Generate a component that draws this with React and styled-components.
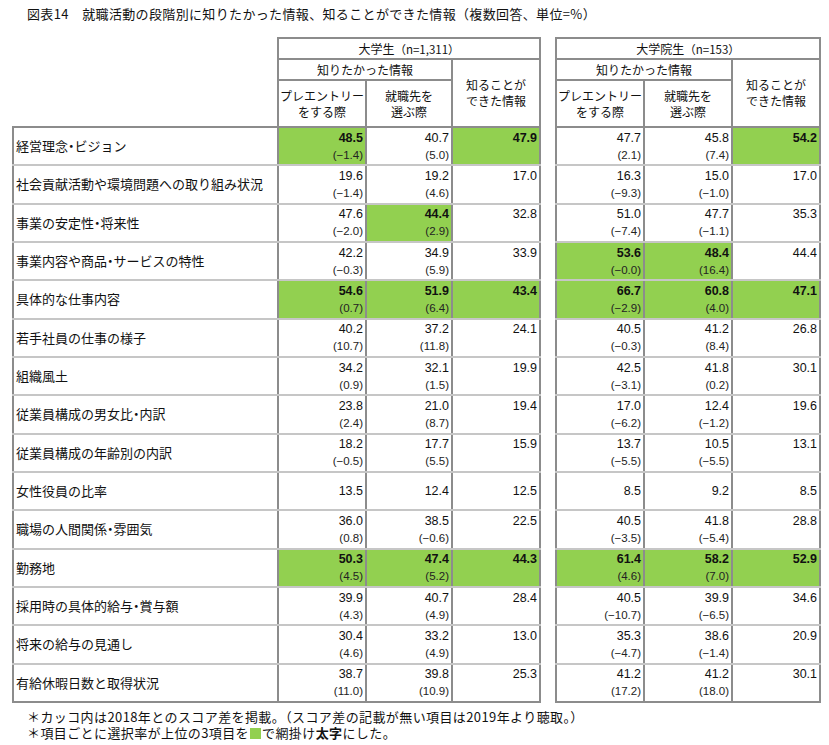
import React from "react";
import styled, { createGlobalStyle } from "styled-components";

const Global = createGlobalStyle`
  html, body { margin: 0; padding: 0; background: #fff; }
  body { font-family: "Noto Sans CJK JP", "Liberation Sans", sans-serif; color: #111; }
`;

const GREEN = "#92d050";
const DARK = "#8c8c8c";
const LIGHT = "#c6c6c6";

const Page = styled.div`
  width: 829px;
  height: 745px;
  box-sizing: border-box;
  padding-top: 6px;
`;

const Title = styled.h1`
  margin: 0 0 0 27px;
  font-size: 13px;
  font-weight: 400;
  line-height: 16px;
  white-space: nowrap;
  letter-spacing: 0.35px;
`;

const Tables = styled.div`
  display: flex;
  align-items: flex-start;
  gap: 14px;
  margin: 15px 0 0 12px;
`;

const Table = styled.table`
  border-collapse: collapse;
  table-layout: fixed;
  width: ${(p) => p.$width}px;
`;

const HeadRow = styled.tr`
  height: ${(p) => p.$h}px;
`;

const Corner = styled.th`
  border: none;
  border-bottom: 2px solid ${DARK};
  padding: 0;
`;

const Head = styled.th`
  border: 2px solid ${DARK};
  font-weight: 400;
  font-size: 12px;
  line-height: 16px;
  padding: 0;
  text-align: center;
  vertical-align: middle;
  white-space: nowrap;
`;

const Small = styled.span`
  font-size: 11.5px;
`;

const BodyRow = styled.tr`
  height: 38.33px;
`;

const Label = styled.td`
  border-left: 2px solid ${DARK};
  border-right: 2px solid ${DARK};
  border-bottom: 2px solid ${(p) => (p.$last ? DARK : LIGHT)};
  font-size: 13px;
  line-height: 16px;
  padding: 0 0 0 2px;
  white-space: nowrap;
  vertical-align: middle;
`;

const Dot = styled.span`
  font-feature-settings: "palt";
`;

const Cell = styled.td`
  border-left: 2px solid ${DARK};
  border-right: 2px solid ${DARK};
  border-bottom: 2px solid ${(p) => (p.$last ? DARK : LIGHT)};
  background: ${(p) => (p.$hi ? GREEN : "#fff")};
  padding: 0 2px 0 0;
  text-align: right;
  vertical-align: middle;
  font-family: "Liberation Sans", "Noto Sans CJK JP", sans-serif;
`;

const Main = styled.div`
  font-size: 12.5px;
  line-height: 18px;
  font-weight: ${(p) => (p.$hi ? 700 : 400)};
  color: #111;
`;

const Diff = styled.div`
  font-size: 11.5px;
  line-height: 17px;
  color: #222;
`;

const Notes = styled.div`
  margin: 6px 0 0 27px;
  font-size: 13px;
  line-height: 16.5px;
  letter-spacing: 0.4px;
  white-space: nowrap;
`;

const Swatch = styled.span`
  display: inline-block;
  width: 11px;
  height: 11px;
  background: ${GREEN};
  margin: 0 1px;
  vertical-align: -1px;
`;

const Bold = styled.b`
  font-weight: 700;
`;

// [label, u1, u2, u3, g1, g2, g3] ; each entry [value, diff, highlight]
const rows = [
  ["経営理念・ビジョン", ["48.5", "−1.4", 1], ["40.7", "5.0"], ["47.9", null, 1], ["47.7", "2.1"], ["45.8", "7.4"], ["54.2", null, 1]],
  ["社会貢献活動や環境問題への取り組み状況", ["19.6", "−1.4"], ["19.2", "4.6"], ["17.0"], ["16.3", "−9.3"], ["15.0", "−1.0"], ["17.0"]],
  ["事業の安定性・将来性", ["47.6", "−2.0"], ["44.4", "2.9", 1], ["32.8"], ["51.0", "−7.4"], ["47.7", "−1.1"], ["35.3"]],
  ["事業内容や商品・サービスの特性", ["42.2", "−0.3"], ["34.9", "5.9"], ["33.9"], ["53.6", "−0.0", 1], ["48.4", "16.4", 1], ["44.4"]],
  ["具体的な仕事内容", ["54.6", "0.7", 1], ["51.9", "6.4", 1], ["43.4", null, 1], ["66.7", "−2.9", 1], ["60.8", "4.0", 1], ["47.1", null, 1]],
  ["若手社員の仕事の様子", ["40.2", "10.7"], ["37.2", "11.8"], ["24.1"], ["40.5", "−0.3"], ["41.2", "8.4"], ["26.8"]],
  ["組織風土", ["34.2", "0.9"], ["32.1", "1.5"], ["19.9"], ["42.5", "−3.1"], ["41.8", "0.2"], ["30.1"]],
  ["従業員構成の男女比・内訳", ["23.8", "2.4"], ["21.0", "8.7"], ["19.4"], ["17.0", "−6.2"], ["12.4", "−1.2"], ["19.6"]],
  ["従業員構成の年齢別の内訳", ["18.2", "−0.5"], ["17.7", "5.5"], ["15.9"], ["13.7", "−5.5"], ["10.5", "−5.5"], ["13.1"]],
  ["女性役員の比率", ["13.5"], ["12.4"], ["12.5"], ["8.5"], ["9.2"], ["8.5"]],
  ["職場の人間関係・雰囲気", ["36.0", "0.8"], ["38.5", "−0.6"], ["22.5"], ["40.5", "−3.5"], ["41.8", "−5.4"], ["28.8"]],
  ["勤務地", ["50.3", "4.5", 1], ["47.4", "5.2", 1], ["44.3", null, 1], ["61.4", "4.6", 1], ["58.2", "7.0", 1], ["52.9", null, 1]],
  ["採用時の具体的給与・賞与額", ["39.9", "4.3"], ["40.7", "4.9"], ["28.4"], ["40.5", "−10.7"], ["39.9", "−6.5"], ["34.6"]],
  ["将来の給与の見通し", ["30.4", "4.6"], ["33.2", "4.9"], ["13.0"], ["35.3", "−4.7"], ["38.6", "−1.4"], ["20.9"]],
  ["有給休暇日数と取得状況", ["38.7", "11.0"], ["39.8", "10.9"], ["25.3"], ["41.2", "17.2"], ["41.2", "18.0"], ["30.1"]],
];

function LabelText({ text }) {
  const parts = text.split("・");
  return parts.map((p, i) => (
    <React.Fragment key={i}>
      {i > 0 && <Dot>・</Dot>}
      {p}
    </React.Fragment>
  ));
}

function Value({ v, twoLine, last }) {
  const [num, diff, hi] = v;
  return (
    <Cell $hi={!!hi} $last={last}>
      <Main $hi={!!hi}>{num}</Main>
      {twoLine && <Diff>{diff ? `(${diff})` : "\u00a0"}</Diff>}
    </Cell>
  );
}

function GroupHead({ title, n }) {
  return (
    <Head colSpan={3}>
      {title}
      <Small>（n={n}）</Small>
    </Head>
  );
}

function SubHeaders() {
  return (
    <>
      <HeadRow $h={21}>
        <Head colSpan={2}>知りたかった情報</Head>
        <Head rowSpan={2}>
          知ることが
          <br />
          できた情報
        </Head>
      </HeadRow>
      <HeadRow $h={47}>
        <Head>
          プレエントリー
          <br />
          をする際
        </Head>
        <Head>
          就職先を
          <br />
          選ぶ際
        </Head>
      </HeadRow>
    </>
  );
}

export default function App() {
  return (
    <Page>
      <Global />
      <Title>図表14　就職活動の段階別に知りたかった情報、知ることができた情報（複数回答、単位=%）</Title>
      <Tables>
        <Table $width={527}>
          <colgroup>
            <col style={{ width: 265 }} />
            <col style={{ width: 88 }} />
            <col style={{ width: 86 }} />
            <col style={{ width: 88 }} />
          </colgroup>
          <thead>
            <HeadRow $h={21}>
              <Corner rowSpan={3} />
              <GroupHead title="大学生" n="1,311" />
            </HeadRow>
            <SubHeaders />
          </thead>
          <tbody>
            {rows.map((r, i) => {
              const twoLine = r.slice(1).some((c) => c[1]);
              const last = i === rows.length - 1;
              return (
                <BodyRow key={i}>
                  <Label $last={last}>
                    <LabelText text={r[0]} />
                  </Label>
                  <Value v={r[1]} twoLine={twoLine} last={last} />
                  <Value v={r[2]} twoLine={twoLine} last={last} />
                  <Value v={r[3]} twoLine={twoLine} last={last} />
                </BodyRow>
              );
            })}
          </tbody>
        </Table>
        <Table $width={264}>
          <colgroup>
            <col style={{ width: 88 }} />
            <col style={{ width: 88 }} />
            <col style={{ width: 88 }} />
          </colgroup>
          <thead>
            <HeadRow $h={21}>
              <GroupHead title="大学院生" n="153" />
            </HeadRow>
            <SubHeaders />
          </thead>
          <tbody>
            {rows.map((r, i) => {
              const twoLine = r.slice(1).some((c) => c[1]);
              const last = i === rows.length - 1;
              return (
                <BodyRow key={i}>
                  <Value v={r[4]} twoLine={twoLine} last={last} />
                  <Value v={r[5]} twoLine={twoLine} last={last} />
                  <Value v={r[6]} twoLine={twoLine} last={last} />
                </BodyRow>
              );
            })}
          </tbody>
        </Table>
      </Tables>
      <Notes>
        ＊カッコ内は2018年とのスコア差を掲載。（スコア差の記載が無い項目は2019年より聴取。）
        <br />
        ＊項目ごとに選択率が上位の3項目を<Swatch />で網掛け<Bold>太字</Bold>にした。
      </Notes>
    </Page>
  );
}
